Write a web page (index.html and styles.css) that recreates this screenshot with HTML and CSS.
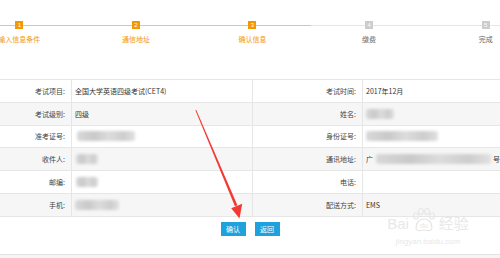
FILE: index.html
```html
<!DOCTYPE html>
<html lang="zh-CN">
<head>
    <meta charset="UTF-8">
    <title>确认信息</title>
    <link rel="stylesheet" href="styles.css">
</head>
<body>
<div class="page">
    <div class="steps">
        <div class="step done">
            <div class="track"><span class="bar"></span><span class="num">1</span><span class="bar"></span></div>
            <div class="step-name">输入信息条件</div>
        </div>
        <div class="step done">
            <div class="track"><span class="bar"></span><span class="num">2</span><span class="bar"></span></div>
            <div class="step-name">通信地址</div>
        </div>
        <div class="step done">
            <div class="track"><span class="bar"></span><span class="num">3</span><span class="bar"></span></div>
            <div class="step-name">确认信息</div>
        </div>
        <div class="step">
            <div class="track"><span class="bar"></span><span class="num">4</span><span class="bar"></span></div>
            <div class="step-name">缴费</div>
        </div>
        <div class="step">
            <div class="track"><span class="bar"></span><span class="num">5</span><span class="bar"></span></div>
            <div class="step-name">完成</div>
        </div>
    </div>

    <div class="info">
        <div class="row">
            <div class="label">考试项目:</div>
            <div class="value">全国大学英语四级考试(CET4)</div>
            <div class="label">考试时间:</div>
            <div class="value">2017年12月</div>
        </div>
        <div class="row">
            <div class="label">考试级别:</div>
            <div class="value">四级</div>
            <div class="label">姓名:</div>
            <div class="value"><span class="blur blur-name"></span></div>
        </div>
        <div class="row">
            <div class="label">准考证号:</div>
            <div class="value"><span class="blur blur-ticket"></span></div>
            <div class="label">身份证号:</div>
            <div class="value"><span class="blur blur-idcard"></span></div>
        </div>
        <div class="row">
            <div class="label">收件人:</div>
            <div class="value"><span class="blur blur-short"></span></div>
            <div class="label">通讯地址:</div>
            <div class="value">广<span class="blur blur-address"></span>号</div>
        </div>
        <div class="row">
            <div class="label">邮编:</div>
            <div class="value"><span class="blur blur-short"></span></div>
            <div class="label">电话:</div>
            <div class="value"></div>
        </div>
        <div class="row">
            <div class="label">手机:</div>
            <div class="value"><span class="blur blur-phone"></span></div>
            <div class="label">配送方式:</div>
            <div class="value">EMS</div>
        </div>
    </div>

    <div class="actions">
        <button class="btn">确认</button>
        <button class="btn">返回</button>
    </div>
    <div class="footer"></div>

    <svg class="arrow" width="500" height="258" viewBox="0 0 500 258">
        <polygon points="195.4,110.3 196.3,109.9 237.4,205.2 234.9,206.3" fill="#f23a32"/>
        <polygon points="239.5,218.5 231.2,208.2 242.2,203.8" fill="#f23a32"/>
    </svg>

    <div class="watermark">
        <div class="wm-logo">
            <span>Bai</span>
            <svg width="28" height="24" viewBox="0 0 28 24">
                <g fill="none" stroke="#e6e6e6" stroke-width="1.2">
                    <ellipse cx="6" cy="8" rx="2.4" ry="3"/>
                    <ellipse cx="11" cy="3.5" rx="2.4" ry="3"/>
                    <ellipse cx="17" cy="3.5" rx="2.4" ry="3"/>
                    <ellipse cx="22" cy="8" rx="2.4" ry="3"/>
                    <path d="M6 20 C6 14 10 11 14 11 C18 11 22 14 22 20 C22 23 19 23 14 22 C9 23 6 23 6 20 Z"/>
                </g>
                <text x="14" y="20" text-anchor="middle" font-size="7" fill="#e6e6e6" font-family="Liberation Sans, sans-serif">du</text>
            </svg>
            <span>经验</span>
        </div>
        <div class="wm-url">jingyan.baidu.com</div>
    </div>
</div>
</body>
</html>
```

FILE: styles.css
```css
body {
    margin: 0;
    padding: 0;
    background-color: #fff;
    font-family: "Noto Sans CJK SC", "Liberation Sans", sans-serif;
    font-size: 7px;
    color: #333;
}
.page {
    position: relative;
    width: 500px;
    height: 258px;
    overflow: hidden;
    display: flex;
    flex-direction: column;
}
.steps {
    display: flex;
    width: 583px;
    margin-left: -39px;
    height: 79px;
    padding-top: 21px;
    box-sizing: border-box;
    flex-shrink: 0;
}
.step {
    flex: 1;
    display: flex;
    flex-direction: column;
}
.track {
    display: flex;
    align-items: center;
    height: 8px;
}
.bar {
    flex: 1;
    height: 1px;
    background-color: #e6e6e6;
}
.num {
    width: 8px;
    height: 8px;
    line-height: 8px;
    text-align: center;
    font-family: "Liberation Sans", sans-serif;
    font-size: 6px;
    color: #fff;
    background-color: #ccc;
}
.step-name {
    margin-top: 6px;
    line-height: 9px;
    text-align: center;
    color: #666;
}
.step.done .bar {
    background-color: #f9bd7c;
}
.step.done .num {
    background-color: #f39800;
}
.step.done .step-name {
    color: #f39800;
}
.info {
    border-top: 1px solid #e6e6e6;
    flex-shrink: 0;
}
.row {
    display: grid;
    grid-template-columns: 72px 181px 110px 1fr;
    height: 22.8px;
    box-sizing: border-box;
    border-bottom: 1px solid #e6e6e6;
}
.row:nth-child(even) {
    background-color: #f6f6f6;
}
.label,
.value {
    display: flex;
    align-items: center;
    border-right: 1px solid #e6e6e6;
    white-space: nowrap;
    overflow: hidden;
}
.label {
    justify-content: flex-end;
    padding-right: 6px;
    color: #444;
}
.value {
    padding-left: 3px;
}
.value:last-child {
    border-right: none;
}
.blur {
    display: inline-block;
    height: 10px;
    background: linear-gradient(90deg, #d8d8d8, #c9c9c9 30%, #dcdcdc 55%, #cdcdcd 80%, #e0e0e0);
    filter: blur(1.4px);
    border-radius: 3px;
}
.blur-name { width: 28px; }
.blur-ticket { width: 58px; margin-left: 2px; }
.blur-idcard { width: 72px; }
.blur-short { width: 22px; margin-left: 1px; }
.blur-phone { width: 44px; }
.blur-address { width: 122px; margin: 0 2px 0 3px; }
.actions {
    height: 37px;
    display: flex;
    justify-content: center;
    align-items: flex-start;
    gap: 9px;
    padding-top: 5px;
    box-sizing: border-box;
    flex-shrink: 0;
}
.btn {
    width: 25px;
    height: 14px;
    padding: 0;
    border: none;
    background-color: #1ea1dd;
    color: #fff;
    font-family: "Noto Sans CJK SC", sans-serif;
    font-size: 7px;
    line-height: 14px;
}
.footer {
    flex: 1;
    border-top: 1px solid #e3e3e3;
    background-color: #f5f5f5;
}
.arrow {
    position: absolute;
    left: 0;
    top: 0;
    pointer-events: none;
}
.watermark {
    position: absolute;
    left: 382px;
    top: 202px;
    width: 92px;
    text-align: center;
    color: #e8e8e8;
    pointer-events: none;
}
.wm-logo {
    display: flex;
    align-items: flex-end;
    justify-content: center;
    height: 30px;
    font-family: "Liberation Sans", "Noto Sans CJK SC", sans-serif;
    font-size: 15px;
    line-height: 17px;
}
.wm-logo svg {
    margin: 0 1px;
}
.wm-url {
    margin-top: 5px;
    font-family: "Liberation Sans", sans-serif;
    font-size: 8px;
    line-height: 9px;
}
```
